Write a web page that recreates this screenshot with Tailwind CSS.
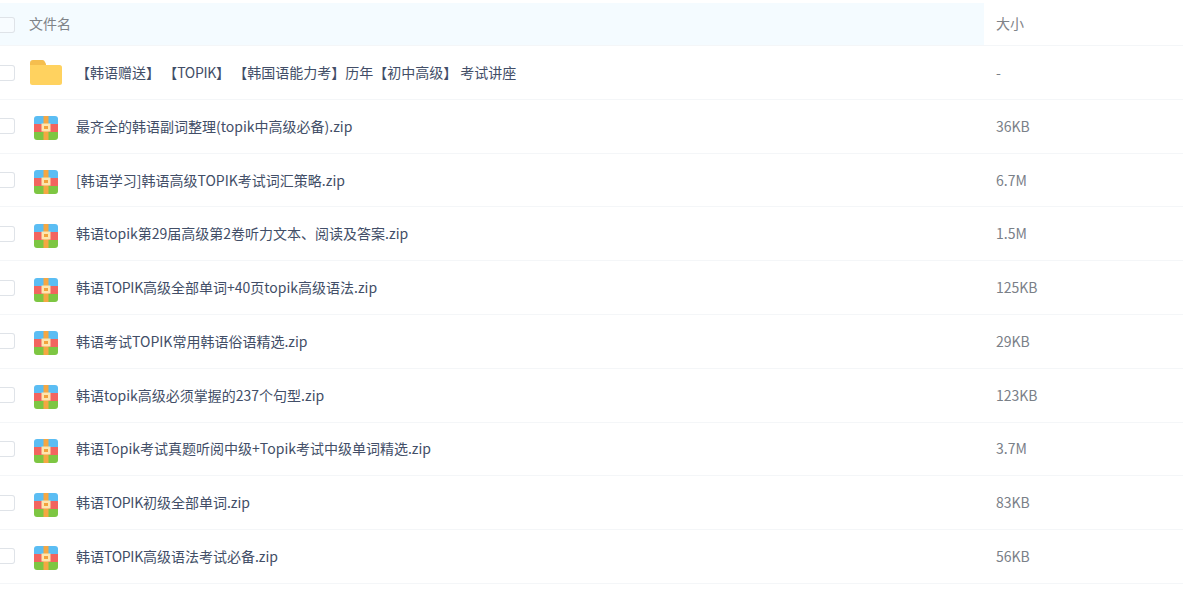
<!DOCTYPE html>
<html lang="zh">
<head>
<meta charset="utf-8">
<script src="https://cdn.jsdelivr.net/npm/@tailwindcss/browser@4"></script>
</head>
<body class="bg-white overflow-hidden font-['Noto_Sans_CJK_SC','Noto_Sans',sans-serif] text-[14px] [text-spacing-trim:space-all]">
<svg class="hidden">
<symbol id="zip" viewBox="0 0 24 24">
<rect width="24" height="8" fill="#5BBDF3"/><rect y="8" width="24" height="8" fill="#F2645F"/><rect y="16" width="24" height="8" fill="#7DC642"/>
<rect x="9.500" width="5" height="24" fill="#F5A742"/><rect x="7.500" y="7.500" width="9" height="8" fill="#FCE6B0"/><rect x="10" y="10" width="4" height="3" fill="#F2A23C"/>
</symbol>
</svg>
<main class="pt-[3px]">
<div class="flex h-[43.15px] border-b border-[#f4f6f8]">
<div class="w-[984px] bg-[#f4fbff] flex items-center pb-[1px] text-[#7f8388]">
<span class="block w-[15px] h-[16px] mt-[2px] shrink-0 border border-[#dfe3e8] rounded-[3px] border-l-0 rounded-l-none bg-white/40"></span>
<span class="ml-[14px]">文件名</span>
</div>
<div class="pl-[12px] flex items-center pb-[1px] text-[#7f8388]">大小</div>
</div>
<ul class="text-[#424e67]">
<li class="flex items-center h-[53.78px] border-b border-[#f4f6f8]">
<span class="block w-[15px] h-[16px] shrink-0 border border-[#dfe3e8] rounded-[3px] border-l-0 rounded-l-none"></span>
<svg class="ml-[15px] w-[32px] h-[25px] shrink-0" viewBox="0 0 32 25"><path d="M0 3a3 3 0 0 1 3-3h9a3 3 0 0 1 3 2l1 2v4H0z" fill="#F5BE4E"/><path d="M0 5h29.500A2.500 2.500 0 0 1 32 7.500V22.500A2.500 2.500 0 0 1 29.500 25H2.500A2.500 2.500 0 0 1 0 22.500z" fill="#FFD25F"/></svg>
<span class="ml-[14px] w-[920px] shrink-0">【韩语赠送】 【<span class="tracking-[-0.3px]">TOPIK</span>】 【韩国语能力考】历年【初中高级】 考试讲座</span>
<span class="text-[#7a8088]">-</span>
</li>
<li class="flex items-center h-[53.78px] border-b border-[#f4f6f8]">
<span class="block w-[15px] h-[16px] shrink-0 border border-[#dfe3e8] rounded-[3px] border-l-0 rounded-l-none"></span>
<svg class="ml-[19px] mt-[4px] w-[24px] h-[24px] shrink-0 rounded-[3px]"><use href="#zip"/></svg>
<span class="ml-[18px] w-[920px] shrink-0">最齐全的韩语副词整理(topik中高级必备).zip</span>
<span class="text-[#7a8088]">36KB</span>
</li>
<li class="flex items-center h-[53.78px] border-b border-[#f4f6f8]">
<span class="block w-[15px] h-[16px] shrink-0 border border-[#dfe3e8] rounded-[3px] border-l-0 rounded-l-none"></span>
<svg class="ml-[19px] mt-[4px] w-[24px] h-[24px] shrink-0 rounded-[3px]"><use href="#zip"/></svg>
<span class="ml-[18px] w-[920px] shrink-0">[韩语学习]韩语高级TOPIK考试词汇策略.zip</span>
<span class="text-[#7a8088]">6.7M</span>
</li>
<li class="flex items-center h-[53.78px] border-b border-[#f4f6f8]">
<span class="block w-[15px] h-[16px] shrink-0 border border-[#dfe3e8] rounded-[3px] border-l-0 rounded-l-none"></span>
<svg class="ml-[19px] mt-[4px] w-[24px] h-[24px] shrink-0 rounded-[3px]"><use href="#zip"/></svg>
<span class="ml-[18px] w-[920px] shrink-0">韩语topik第29届高级第2卷听力文本、阅读及答案.zip</span>
<span class="text-[#7a8088]">1.5M</span>
</li>
<li class="flex items-center h-[53.78px] border-b border-[#f4f6f8]">
<span class="block w-[15px] h-[16px] shrink-0 border border-[#dfe3e8] rounded-[3px] border-l-0 rounded-l-none"></span>
<svg class="ml-[19px] mt-[4px] w-[24px] h-[24px] shrink-0 rounded-[3px]"><use href="#zip"/></svg>
<span class="ml-[18px] w-[920px] shrink-0">韩语<span class="tracking-[-0.3px]">TOPIK</span>高级全部单词+40页topik高级语法.zip</span>
<span class="text-[#7a8088]">125KB</span>
</li>
<li class="flex items-center h-[53.78px] border-b border-[#f4f6f8]">
<span class="block w-[15px] h-[16px] shrink-0 border border-[#dfe3e8] rounded-[3px] border-l-0 rounded-l-none"></span>
<svg class="ml-[19px] mt-[4px] w-[24px] h-[24px] shrink-0 rounded-[3px]"><use href="#zip"/></svg>
<span class="ml-[18px] w-[920px] shrink-0">韩语考试TOPIK常用韩语俗语精选.zip</span>
<span class="text-[#7a8088]">29KB</span>
</li>
<li class="flex items-center h-[53.78px] border-b border-[#f4f6f8]">
<span class="block w-[15px] h-[16px] shrink-0 border border-[#dfe3e8] rounded-[3px] border-l-0 rounded-l-none"></span>
<svg class="ml-[19px] mt-[4px] w-[24px] h-[24px] shrink-0 rounded-[3px]"><use href="#zip"/></svg>
<span class="ml-[18px] w-[920px] shrink-0">韩语topik高级必须掌握的237个句型.zip</span>
<span class="text-[#7a8088]">123KB</span>
</li>
<li class="flex items-center h-[53.78px] border-b border-[#f4f6f8]">
<span class="block w-[15px] h-[16px] shrink-0 border border-[#dfe3e8] rounded-[3px] border-l-0 rounded-l-none"></span>
<svg class="ml-[19px] mt-[4px] w-[24px] h-[24px] shrink-0 rounded-[3px]"><use href="#zip"/></svg>
<span class="ml-[18px] w-[920px] shrink-0">韩语Topik考试真题听阅中级+Topik考试中级单词精选.zip</span>
<span class="text-[#7a8088]">3.7M</span>
</li>
<li class="flex items-center h-[53.78px] border-b border-[#f4f6f8]">
<span class="block w-[15px] h-[16px] shrink-0 border border-[#dfe3e8] rounded-[3px] border-l-0 rounded-l-none"></span>
<svg class="ml-[19px] mt-[4px] w-[24px] h-[24px] shrink-0 rounded-[3px]"><use href="#zip"/></svg>
<span class="ml-[18px] w-[920px] shrink-0">韩语<span class="tracking-[-0.3px]">TOPIK</span>初级全部单词.zip</span>
<span class="text-[#7a8088]">83KB</span>
</li>
<li class="flex items-center h-[53.78px] border-b border-[#f4f6f8]">
<span class="block w-[15px] h-[16px] shrink-0 border border-[#dfe3e8] rounded-[3px] border-l-0 rounded-l-none"></span>
<svg class="ml-[19px] mt-[4px] w-[24px] h-[24px] shrink-0 rounded-[3px]"><use href="#zip"/></svg>
<span class="ml-[18px] w-[920px] shrink-0">韩语<span class="tracking-[-0.3px]">TOPIK</span>高级语法考试必备.zip</span>
<span class="text-[#7a8088]">56KB</span>
</li>
</ul>
</main>
</body>
</html>
